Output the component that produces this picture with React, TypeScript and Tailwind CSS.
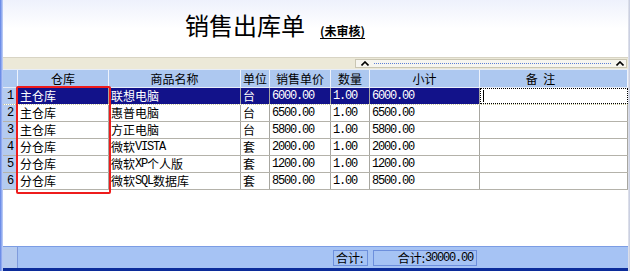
import React from 'react';

const cjk = '"Noto Sans CJK SC", "Noto Sans", sans-serif';
const mono = '"Liberation Mono", "Noto Sans CJK SC", monospace';

type Row = {
  store: string;
  name: string;
  unit: string;
  price: string;
  qty: string;
  total: string;
};

const rows: Row[] = [
  { store: '主仓库', name: '联想电脑', unit: '台', price: '6000.00', qty: '1.00', total: '6000.00' },
  { store: '主仓库', name: '惠普电脑', unit: '台', price: '6500.00', qty: '1.00', total: '6500.00' },
  { store: '主仓库', name: '方正电脑', unit: '台', price: '5800.00', qty: '1.00', total: '5800.00' },
  { store: '分仓库', name: '微软VISTA', unit: '套', price: '2000.00', qty: '1.00', total: '2000.00' },
  { store: '分仓库', name: '微软XP个人版', unit: '套', price: '1200.00', qty: '1.00', total: '1200.00' },
  { store: '分仓库', name: '微软SQL数据库', unit: '套', price: '8500.00', qty: '1.00', total: '8500.00' },
];

const cols = [
  { label: '仓库', w: 'w-[91px]' },
  { label: '商品名称', w: 'w-[132px]' },
  { label: '单位', w: 'w-[29px]' },
  { label: '销售单价', w: 'w-[61px]' },
  { label: '数量', w: 'w-[39px]' },
  { label: '小计', w: 'w-[110px]' },
  { label: '备  注', w: 'w-[148px]', extra: 'pr-[26px]' },
];

const Num = ({ t }: { t: string }) => (
  <span className="text-[12px] tracking-[-1.2px]" style={{ fontFamily: mono }}>
    {t}
  </span>
);

// latin bits in mono, chinese in cjk
const Mixed = ({ text }: { text: string }) => {
  const parts = text.split(/([A-Za-z0-9.]+)/).filter(Boolean);
  return (
    <>
      {parts.map((p, i) => (/^[A-Za-z0-9.]+$/.test(p) ? <Num key={i} t={p} /> : <span key={i}>{p}</span>))}
    </>
  );
};

const Cell = ({ w, text, sel }: { w: string; text: string; sel: boolean }) => (
  <div
    className={`${w} h-full shrink-0 border-r border-[#a7a6a0] pl-[2px] flex items-center whitespace-nowrap overflow-hidden ${
      sel ? 'bg-[#12128a] text-white' : 'text-black'
    }`}
  >
    <Mixed text={text} />
  </div>
);

const Caret = () => (
  <svg width="8" height="5" viewBox="0 0 8 5" className="shrink-0">
    <path d="M0.5 4.5 L4 1 L7.5 4.5" fill="none" stroke="#000" strokeWidth="1.6" />
  </svg>
);

export default function App() {
  return (
    <div className="w-[630px] h-[271px] flex bg-white overflow-hidden relative text-[12px]" style={{ fontFamily: cjk }}>
      {/* left window frame */}
      <div className="w-[3px] shrink-0 bg-gradient-to-r from-[#5d7fe4] to-[#c8d5f7]" />

      <div className="flex-1 flex flex-col min-w-0">
        {/* title */}
        <div className="h-[57px] flex items-start pt-[9px] pl-[182px] bg-gradient-to-b from-[#eef1fc] via-white to-white">
          <span className="text-[24px] leading-[32px] text-black">销售出库单</span>
          <span className="ml-[15px] mt-[14px] text-[12px] leading-[15px] font-bold underline underline-offset-2 text-black">
            (未审核)
          </span>
        </div>

        {/* splitter */}
        <div className="h-[12px] bg-[#ece9d8] border-t border-[#d8d4c4] flex items-center pr-[1px]">
          <div className="ml-[352px] flex-1 h-[9px] bg-[#f6f5ef] border border-[#c9c5b2] flex items-center pl-[5px] pr-[2px] gap-[5px]">
            <Caret />
            <div className="flex-1 border-t border-dotted border-[#5b7fd6]" />
            <Caret />
          </div>
        </div>

        {/* header */}
        <div className="h-[19px] flex bg-[#adc8f0] border-t border-[#e7edf8] border-b border-[#9db8e6]">
          <div className="w-[15px] shrink-0 border-r border-[#eef3fc]" />
          {cols.map((c) => (
            <div
              key={c.label}
              className={`${c.w} ${c.extra ?? ''} shrink-0 h-full border-r border-[#eef3fc] flex items-center justify-center whitespace-pre text-black`}
            >
              {c.label}
            </div>
          ))}
        </div>

        {/* rows */}
        <div className="flex flex-col">
          {rows.map((r, i) => {
            const sel = i === 0;
            return (
              <div
                key={i}
                className={`h-[17px] flex border-b ${sel ? 'border-[#c9c79a] border-dotted' : 'border-[#b4b2aa]'}`}
              >
                <div className="w-[15px] shrink-0 bg-[#b4cbef] border-r border-[#8aa0c8] flex items-center justify-center text-black">
                  <Num t={String(i + 1)} />
                </div>
                <Cell w="w-[91px]" text={r.store} sel={sel} />
                <Cell w="w-[132px]" text={r.name} sel={sel} />
                <Cell w="w-[29px]" text={r.unit} sel={sel} />
                <Cell w="w-[61px]" text={r.price} sel={sel} />
                <Cell w="w-[39px]" text={r.qty} sel={sel} />
                <Cell w="w-[110px]" text={r.total} sel={sel} />
                <div
                  className={`w-[148px] shrink-0 h-full border-r border-[#a7a6a0] flex items-center pl-[2px] ${
                    sel ? 'border border-dotted border-black' : ''
                  }`}
                >
                  {sel && <div className="w-px h-[12px] bg-black" />}
                </div>
              </div>
            );
          })}
        </div>

        <div className="flex-1 bg-white" />

        {/* status bar */}
        <div className="h-[22px] flex bg-[#a6c3f4] border-t border-[#7b9ce4]">
          <div className="w-[15px] shrink-0 bg-[#b6cbef] border-r border-[#7f9bdc]" />
          <div className="ml-[315px] mt-[3px] h-[16px] w-[35px] border border-[#6d8fdc] flex items-center pl-[2px] text-black">
            合计:
          </div>
          <div className="ml-[5px] mt-[3px] h-[16px] w-[104px] border border-[#6d8fdc] flex items-center justify-end pr-[3px] text-black">
            合计:<Num t="30000.00" />
          </div>
        </div>
        <div className="h-[3px] bg-[#0c2c9a]" />
      </div>

      {/* right frame */}
      <div className="w-[2px] shrink-0 bg-gradient-to-r from-[#e4e6ee] to-[#c3c9dd]" />

      {/* red highlight around warehouse column */}
      <div className="absolute left-[16px] top-[86px] w-[95px] h-[108px] border-2 border-[#ee1c1c] rounded-[2px] pointer-events-none" />
    </div>
  );
}
